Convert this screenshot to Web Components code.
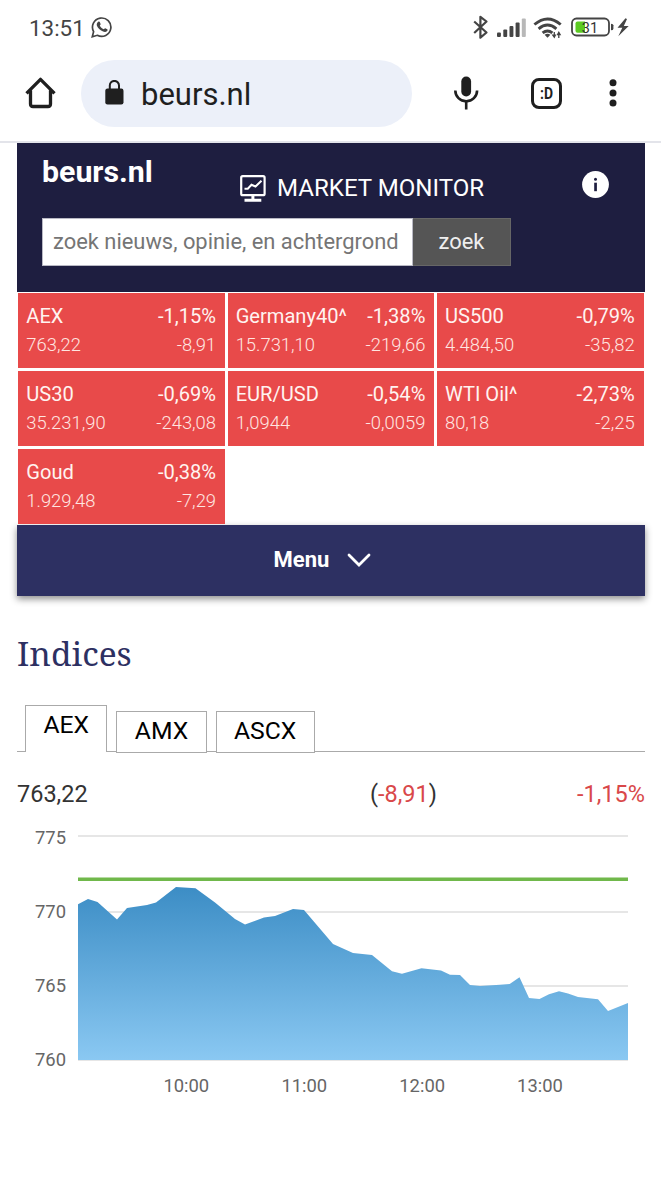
<!DOCTYPE html>
<html lang="nl">
<head>
<meta charset="utf-8">
<title>beurs.nl</title>
<style>
  body {
    margin: 0;
    background: #fff;
    font-family: Roboto, "Liberation Sans", sans-serif;
    color: #333;
  }

  main {
    margin: 0 16px 0 17px;
  }
</style>
</head>
<body>
<status-bar time="13:51" battery="31"></status-bar>
<browser-bar>beurs.nl</browser-bar>
<main>
  <site-header>
    <span slot="brand">beurs.nl</span>
    <span slot="monitor">MARKET MONITOR</span>
  </site-header>
  <quote-grid>
    <quote-cell name="AEX" percent="-1,15%" value="763,22" change="-8,91"></quote-cell>
    <quote-cell name="Germany40^" percent="-1,38%" value="15.731,10" change="-219,66"></quote-cell>
    <quote-cell name="US500" percent="-0,79%" value="4.484,50" change="-35,82"></quote-cell>
    <quote-cell name="US30" percent="-0,69%" value="35.231,90" change="-243,08"></quote-cell>
    <quote-cell name="EUR/USD" percent="-0,54%" value="1,0944" change="-0,0059"></quote-cell>
    <quote-cell name="WTI Oil^" percent="-2,73%" value="80,18" change="-2,25"></quote-cell>
    <quote-cell name="Goud" percent="-0,38%" value="1.929,48" change="-7,29"></quote-cell>
  </quote-grid>
  <menu-bar>Menu</menu-bar>
  <index-panel>
    <span slot="title">Indices</span>
    <index-tab slot="tabs" active>AEX</index-tab>
    <index-tab slot="tabs">AMX</index-tab>
    <index-tab slot="tabs">ASCX</index-tab>
    <index-summary value="763,22" change="-8,91" percent="-1,15%"></index-summary>
    <area-chart></area-chart>
  </index-panel>
</main>

<template id="status-bar">
  <style>
    :host {
      display: flex;
      align-items: center;
      justify-content: space-between;
      height: 53px;
      padding: 0 32px 0 29px;
      box-sizing: border-box;
      color: #444;
    }
    .left, .right {
      display: flex;
      align-items: center;
    }
    .left {
      gap: 6px;
    }
    #time {
      font-size: 22.4px;
      line-height: 26px;
      margin-top: 2px;
    }
    svg {
      display: block;
    }
  </style>
  <div class="left">
    <span id="time"></span>
    <svg width="22" height="22" viewBox="0 0 22 22" fill="none" stroke="#444" stroke-width="1.7">
      <path d="M1.3 20.7 2.6 15.6A9.2 9.2 0 1 1 6.3 19.3Z"/>
      <path d="M7.2 5.8c.7-.5 1.3-.4 1.6.3l.8 1.8c.2.5-.8 1.3-.8 1.6.8 1.8 2 3 3.8 3.7.5 0 1.2-1.1 1.7-.9l1.9.9c.6.3.4 1.4-.1 1.9-1.2 1.2-2.7 1.1-4.5.2-2.5-1.1-4.7-3.2-5.7-5.6-.5-1.5.2-3.2 1.3-3.9z" fill="#444" stroke="none"/>
    </svg>
  </div>
  <div class="right">
    <svg width="157" height="26" viewBox="472 13 157 26">
      <path d="M474.2 20.5 486.5 31.5 480.4 36.700V15.800L486.500 20.500 474.200 32" fill="none" stroke="#444" stroke-width="2.200" stroke-linejoin="round"/>
      <g fill="#444">
        <rect x="497" y="31.5" width="3.9" height="4.5" rx="1"/>
        <rect x="503.3" y="28.5" width="3.900" height="7.5" rx="1"/>
        <rect x="509.500" y="25" width="3.900" height="11" rx="1"/>
        <rect x="515.600" y="21.500" width="4" height="14.500" rx="1"/>
        <rect x="521.800" y="17.500" width="4" height="18.500" rx="1" fill="#b8b8b8"/>
      </g>
      <g fill="none" stroke="#444" stroke-width="2.9">
        <path d="M534.4 23.5Q547.5 12.3 560.7 23.5"/>
        <path d="M538.6 27.8Q547.5 20.4 556.4 27.8"/>
        <path d="M542.6 31.9Q547.5 28 552.4 31.9"/>
      </g>
      <path d="M544.6 33.7Q547.5 31.6 550.4 33.7L547.5 36.7Z" fill="#444"/>
      <path d="M554.3 31v4M552.8 34.2l1.5 2 1-2zM558.8 37v-4.5M557.6 33.5l1.2-2.2 1.3 2.2z" stroke="#444" stroke-width="1.3" fill="#444"/>
      <rect x="572" y="17.5" width="37" height="17" rx="4.5" fill="#fff" stroke="#444" stroke-width="1.8"/>
      <path d="M577.5 20.5h7.5v11.200h-7.500q-2 0-2-2v-7.200q0-2 2-2z" fill="#5ccb22"/>
      <path d="M611 22.700q2.400 0 2.400 1.500v3.600q0 1.500-2.400 1.500z" fill="#444"/>
      <text id="battery" x="590" y="31.500" font-size="14.500" text-anchor="middle" fill="#333"></text>
      <path d="M625.5 17.3 617.5 26.7H622.3L618.3 35.2 628.7 25H623.8L627 18Z" fill="#444"/>
    </svg>
  </div>
</template>

<template id="browser-bar">
  <style>
    :host {
      display: flex;
      align-items: center;
      height: 90px;
      box-sizing: border-box;
      padding: 0 39px 8px 25px;
      border-bottom: 2px solid #e3e4ea;
      color: #1f1f1f;
    }
    .url {
      display: flex;
      align-items: center;
      gap: 17px;
      width: 331px;
      height: 67px;
      margin: 0 42px 0 25px;
      padding: 2px 0 0 24px;
      box-sizing: border-box;
      border-radius: 34px;
      background: #ecf0f9;
      font-size: 31px;
    }
    .url svg {
      margin-top: -3px;
    }
    .tabs {
      margin: 0 47px 0 52px;
    }
    svg {
      display: block;
    }
  </style>
  <svg width="31" height="32" viewBox="0 0 31 32" fill="none" stroke="#1f1f1f" stroke-width="3.3">
    <path d="M1.5 16.3 15.5 2.300 29.500 16.300M5.500 13.500V27Q5.500 29.500 8 29.500H23Q25.500 29.500 25.500 27V13.500" stroke-linejoin="round"/>
  </svg>
  <div class="url">
    <svg width="19" height="25" viewBox="0 0 19 25">
      <rect x="0.3" y="8.5" width="18.2" height="16" rx="2.2" fill="#1f1f1f"/>
      <path d="M4.8 9V5.5a4.6 4.6 0 0 1 9.2 0V9" fill="none" stroke="#1f1f1f" stroke-width="2"/>
    </svg>
    <slot></slot>
  </div>
  <svg width="25" height="34" viewBox="0 0 25 34">
    <rect x="7.3" y="0.5" width="9.8" height="20" rx="4.9" fill="#1f1f1f"/>
    <path d="M1.3 14.5a10.9 10.9 0 0 0 21.8 0M12.2 25.5V33.5" fill="none" stroke="#1f1f1f" stroke-width="2.6"/>
  </svg>
  <svg class="tabs" width="31" height="31" viewBox="0 0 31 31">
    <rect x="1.5" y="1.5" width="28" height="28" rx="6.5" fill="none" stroke="#1f1f1f" stroke-width="3"/>
    <text x="15.5" y="20.5" font-size="16.5" font-weight="700" text-anchor="middle" fill="#1f1f1f" textLength="13" lengthAdjust="spacingAndGlyphs">:D</text>
  </svg>
  <svg width="8" height="28" viewBox="0 0 8 28" fill="#1f1f1f">
    <circle cx="4" cy="3.7" r="3.5"/>
    <circle cx="4" cy="13.9" r="3.5"/>
    <circle cx="4" cy="24.1" r="3.5"/>
  </svg>
</template>

<template id="site-header">
  <style>
    :host {
      display: block;
      height: 148.5px;
      box-sizing: border-box;
      padding: 11px 35px 0 25px;
      background: #1e1e40;
      color: #fff;
    }
    .top {
      display: flex;
      align-items: flex-start;
      height: 64px;
    }
    .brand {
      width: 198px;
      font-size: 30.3px;
      line-height: 35px;
      font-weight: 700;
    }
    .monitor {
      display: flex;
      align-items: center;
      gap: 11px;
      flex: 1;
      padding-top: 19px;
      font-size: 24.1px;
      line-height: 30px;
    }
    .info {
      margin: 17px 1px 0 0;
    }
    svg {
      display: block;
    }
    form {
      display: flex;
      width: 469px;
      height: 48px;
      margin: 0;
    }
    input {
      width: 371px;
      box-sizing: border-box;
      border: 1px solid #b9b9c4;
      border-radius: 0;
      margin: 0;
      padding: 0 0 2px 10px;
      background: #fff;
      font: 21.9px Roboto, "Liberation Sans", sans-serif;
    }
    input::placeholder {
      color: #757575;
    }
    button {
      flex: 1;
      border: 1px solid #666;
      border-left: 0;
      padding: 0 0 2px;
      background: #555;
      color: #eee;
      font: 21.9px Roboto, "Liberation Sans", sans-serif;
    }
  </style>
  <div class="top">
    <div class="brand"><slot name="brand"></slot></div>
    <div class="monitor">
      <svg width="26" height="27" viewBox="0 0 26 27" fill="none" stroke="#fff">
        <rect x="1.2" y="1.2" width="23.4" height="19" rx="1.5" stroke-width="2.2"/>
        <path d="M4.5 13.8H7.8L11.5 9.8 15.5 11.5 21.5 5.8" stroke-width="2"/>
        <path d="M12.9 20.5V25M4.5 25.2H21.3" stroke-width="3"/>
      </svg>
      <slot name="monitor"></slot>
    </div>
    <svg class="info" width="27" height="27" viewBox="0 0 27 27">
      <circle cx="13.5" cy="13.5" r="13.4" fill="#fff"/>
      <circle cx="13.5" cy="8.3" r="1.5" fill="#1e1e40"/>
      <rect x="12.2" y="11.7" width="2.7" height="8.5" fill="#1e1e40"/>
    </svg>
  </div>
  <form>
    <input placeholder="zoek nieuws, opinie, en achtergrond">
    <button type="button">zoek</button>
  </form>
</template>

<template id="quote-grid">
  <style>
    :host {
      display: grid;
      grid-template-columns: repeat(3, 1fr);
      grid-auto-rows: 78px;
      height: 233.5px;
    }
  </style>
  <slot></slot>
</template>

<template id="quote-cell">
  <style>
    :host {
      display: block;
      padding: 1.3px;
    }
    .box {
      display: flex;
      flex-direction: column;
      height: 100%;
      box-sizing: border-box;
      padding: 9px 9px 0 8px;
      background: #e84a4a;
      color: #fff3f0;
    }
    .row {
      display: flex;
      justify-content: space-between;
      font-size: 20.1px;
      line-height: 29px;
    }
    .small {
      font-size: 18.4px;
      line-height: 28px;
      font-weight: 300;
      color: #ffe6e1;
    }
  </style>
  <div class="box">
    <div class="row"><span id="name"></span><span id="percent"></span></div>
    <div class="row small"><span id="value"></span><span id="change"></span></div>
  </div>
</template>

<template id="menu-bar">
  <style>
    :host {
      display: flex;
      align-items: center;
      justify-content: center;
      gap: 18px;
      height: 70.5px;
      padding: 0 17px 2px 0;
      box-sizing: border-box;
      background: #2d3062;
      box-shadow: 0 3px 7px rgba(0, 0, 0, 0.45);
      color: #fff;
      font-size: 22px;
      font-weight: 700;
    }
    svg {
      margin-top: 2px;
    }
  </style>
  <slot></slot>
  <svg width="24" height="14" viewBox="0 0 24 14" fill="none" stroke="#fff" stroke-width="2.8" stroke-linecap="round">
    <path d="M2 2 12 12 22 2"/>
  </svg>
</template>

<template id="index-panel">
  <style>
    :host {
      display: block;
    }
    h2 {
      margin: 35px 0 0;
      height: 74px;
      font: 400 33.5px/44px "Noto Serif", "DejaVu Serif", serif;
      color: #2d3062;
    }
    .tabs {
      display: flex;
      align-items: flex-end;
      gap: 9px;
      height: 48px;
      padding-left: 8px;
      box-sizing: border-box;
      background: linear-gradient(#aaa, #aaa) 0 46px / 100% 1px no-repeat;
    }
  </style>
  <h2><slot name="title"></slot></h2>
  <div class="tabs"><slot name="tabs"></slot></div>
  <slot></slot>
</template>

<template id="index-tab">
  <style>
    :host {
      display: block;
      height: 42px;
      box-sizing: border-box;
      padding: 0 17.4px;
      border: 1px solid #aaa;
      background: #fff;
      color: #000;
      font-size: 24.7px;
      line-height: 38px;
    }
    :host([active]) {
      height: 47px;
      margin-bottom: 1px;
      border-bottom: 0;
    }
  </style>
  <slot></slot>
</template>

<template id="index-summary">
  <style>
    :host {
      display: grid;
      grid-template-columns: 1fr auto 1fr;
      padding-top: 26px;
      font-size: 23.5px;
      line-height: 30px;
    }
    .mid {
      padding-left: 145px;
    }
    .right {
      text-align: right;
    }
    .down {
      color: #d9484a;
    }
  </style>
  <span id="value"></span>
  <span class="mid">(<span class="down" id="change"></span>)</span>
  <span class="right down" id="percent"></span>
</template>

<script>
function define(name, setup) {
  customElements.define(name, class extends HTMLElement {
    constructor() {
      super();
      this.attachShadow({ mode: "open" });
      const template = document.getElementById(name);
      if (template) {
        this.shadowRoot.appendChild(template.content.cloneNode(true));
      }
    }

    connectedCallback() {
      if (setup) setup(this);
    }
  });
}

// copies attributes into the nodes with the same id
function fill(...names) {
  return (el) => {
    names.forEach((name) => {
      el.shadowRoot.getElementById(name).textContent = el.getAttribute(name);
    });
  };
}

const points = [
  [78, 904.3], [88, 899], [97.5, 902], [117, 919.5], [127, 908], [147, 905],
  [156, 902.5], [176, 887], [195.5, 888.3], [215, 902.5], [235, 919],
  [245, 924.5], [264, 917.5], [275, 916], [293, 909], [304, 910], [333, 944],
  [353, 953], [372, 955], [392, 971.3], [402, 973.7], [421.5, 968.3],
  [441, 970.5], [450, 974.7], [460, 975], [470, 985], [480, 986],
  [500, 984.7], [509.7, 984], [519.5, 977.3], [529, 998], [539.5, 999],
  [549, 994.3], [559, 991.3], [568, 993.5], [578, 997], [598, 999.3],
  [608, 1011], [628, 1003]
];
const levels = [[775, 836], [770, 912], [765, 986], [760, 1060]];
const labelY = [844, 918, 992, 1066];
const hours = [["10:00", 186.3], ["11:00", 304.3], ["12:00", 422.2], ["13:00", 540]];

function drawChart(el) {
  const grid = levels.map(([, y]) =>
    `<path d="M78 ${y}H628" stroke="#e6e6e6" stroke-width="2"/>`).join("");
  const yLabels = levels.map(([v], i) =>
    `<text x="66" y="${labelY[i]}" text-anchor="end">${v}</text>`).join("");
  const xLabels = hours.map(([t, x]) =>
    `<text x="${x}" y="1091.5" text-anchor="middle">${t}</text>`).join("");
  const line = points.map((p) => p.join(" ")).join("L");

  el.shadowRoot.innerHTML = `
    <style>
      :host {
        display: block;
      }
      svg {
        display: block;
      }
      text {
        font-size: 18.4px;
        fill: #666;
      }
    </style>
    <svg width="628" height="290" viewBox="17 809 628 290">
      <defs>
        <linearGradient id="area" x1="0" y1="0" x2="0" y2="1">
          <stop offset="0" stop-color="#3c8dc5"/>
          <stop offset="1" stop-color="#8ac8f2"/>
        </linearGradient>
      </defs>
      ${grid}
      <path d="M${line}V1060H78Z" fill="url(#area)"/>
      <path d="M78 879.3H628" stroke="#70b84b" stroke-width="3.6"/>
      ${yLabels}
      ${xLabels}
    </svg>`;
}

define("status-bar", fill("time", "battery"));
define("browser-bar");
define("site-header");
define("quote-grid");
define("quote-cell", fill("name", "percent", "value", "change"));
define("menu-bar");
define("index-panel");
define("index-tab");
define("index-summary", fill("value", "change", "percent"));
define("area-chart", drawChart);
</script>
</body>
</html>
